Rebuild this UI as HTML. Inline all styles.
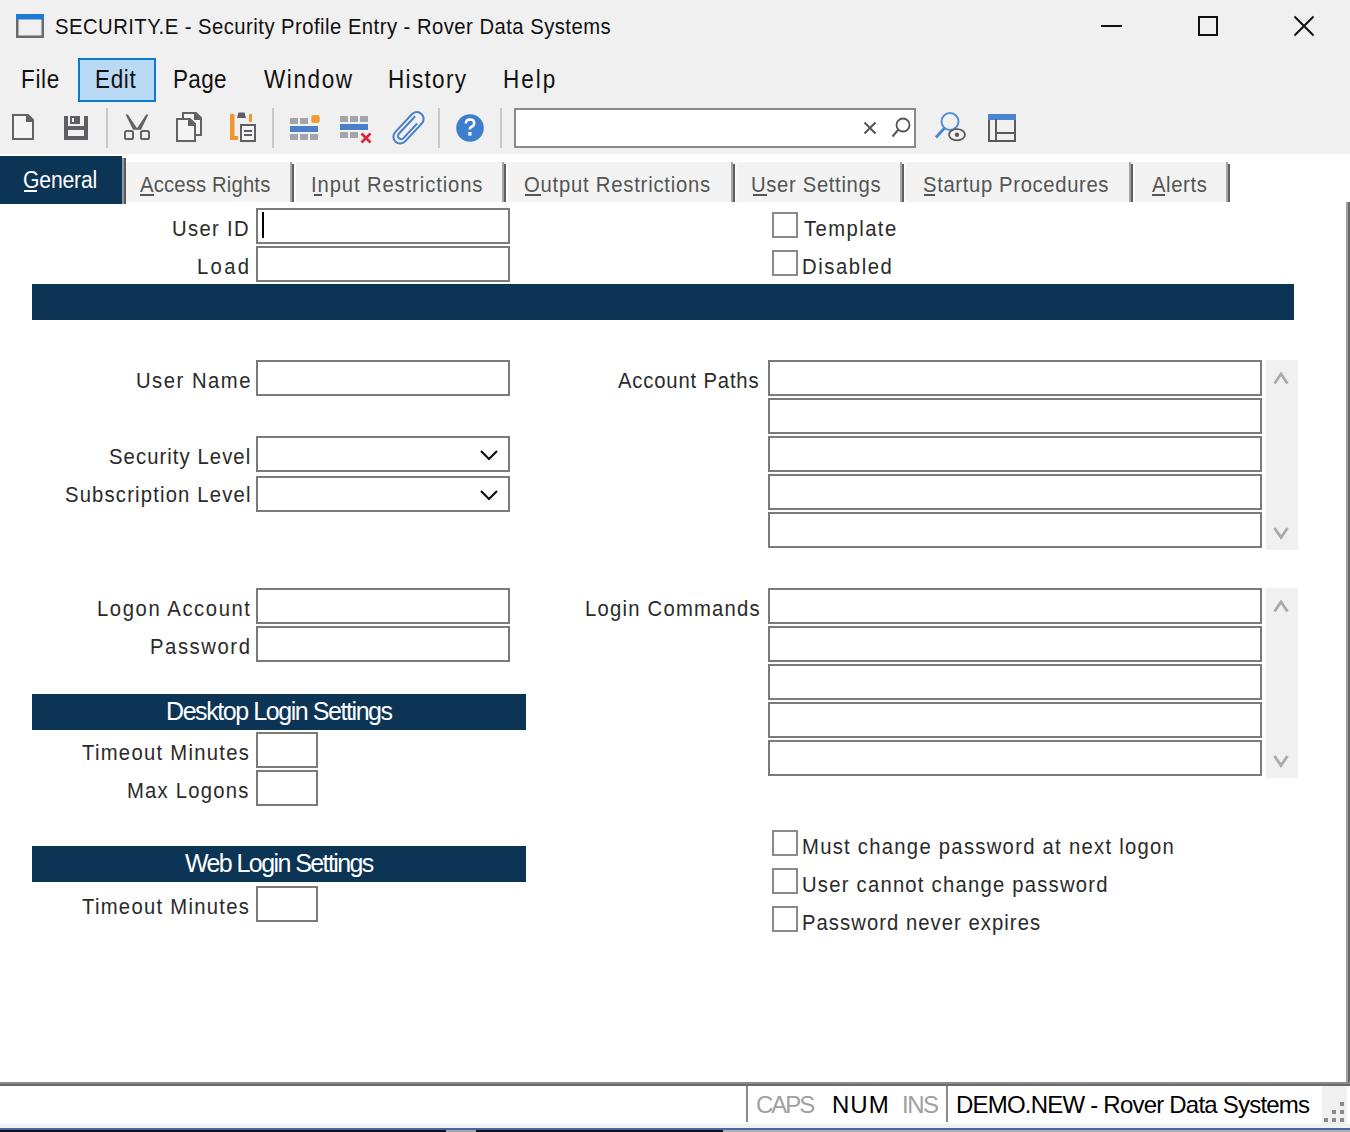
<!DOCTYPE html>
<html><head><meta charset="utf-8"><style>
html,body{margin:0;padding:0}
body{width:1350px;height:1132px;overflow:hidden;position:relative;background:#fff;font-family:'Liberation Sans', sans-serif}
</style></head><body>
<div style="position:absolute;left:0px;top:0px;width:1350px;height:154px;background:#f0f0f0;"></div>
<svg style="position:absolute;left:16px;top:14px" width="28" height="24" viewBox="0 0 28 24"><rect x="1.25" y="1.25" width="25.5" height="21.5" fill="none" stroke="#6b6b6b" stroke-width="2.5"/><rect x="0" y="0" width="28" height="5.5" fill="#1f7ad4"/></svg>
<div style="position:absolute;left:1101px;top:25px;width:21px;height:2px;background:#111;"></div>
<svg style="position:absolute;left:1196px;top:14px" width="24" height="24" viewBox="0 0 24 24"><rect x="3" y="3" width="18" height="18" fill="none" stroke="#111" stroke-width="2"/></svg>
<svg style="position:absolute;left:1292px;top:14px" width="24" height="24" viewBox="0 0 24 24"><path d="M2.5 2.5 L21.5 21.5 M21.5 2.5 L2.5 21.5" stroke="#111" stroke-width="2"/></svg>
<div style="position:absolute;left:78px;top:58px;width:74px;height:40px;border:2px solid #0a78d7;background:#b8d8f4;"></div>
<div style="position:absolute;left:106px;top:108px;width:2px;height:40px;background:#c9c9c9;"></div>
<div style="position:absolute;left:272px;top:108px;width:2px;height:40px;background:#c9c9c9;"></div>
<div style="position:absolute;left:438px;top:108px;width:2px;height:40px;background:#c9c9c9;"></div>
<div style="position:absolute;left:500px;top:108px;width:2px;height:40px;background:#c9c9c9;"></div>
<div style="position:absolute;left:514px;top:108px;width:398px;height:36px;border:2px solid #8a8a8a;background:#fff;"></div>
<div style="position:absolute;left:0px;top:154px;width:1350px;height:50px;background:#fff;"></div>
<div style="position:absolute;left:0px;top:156px;width:122px;height:48px;background:#0c3455;"></div>
<div style="position:absolute;left:122px;top:158px;width:2px;height:46px;background:#8d99a6;"></div>
<div style="position:absolute;left:124px;top:158px;width:2px;height:46px;background:#5a5a5a;"></div>
<div style="position:absolute;left:126px;top:162px;width:164px;height:40px;background:#f3f3f3;"></div>
<div style="position:absolute;left:290px;top:162px;width:212px;height:40px;background:#f3f3f3;"></div>
<div style="position:absolute;left:502px;top:162px;width:229px;height:40px;background:#f3f3f3;"></div>
<div style="position:absolute;left:731px;top:162px;width:169px;height:40px;background:#f3f3f3;"></div>
<div style="position:absolute;left:900px;top:162px;width:229px;height:40px;background:#f3f3f3;"></div>
<div style="position:absolute;left:1129px;top:162px;width:97px;height:40px;background:#f3f3f3;"></div>
<div style="position:absolute;left:290px;top:162px;width:2px;height:40px;background:#a6a6a6;"></div>
<div style="position:absolute;left:292px;top:164px;width:2px;height:38px;background:#5e5e5e;"></div>
<div style="position:absolute;left:294px;top:162px;width:2px;height:40px;background:#fbfbfb;"></div>
<div style="position:absolute;left:502px;top:162px;width:2px;height:40px;background:#a6a6a6;"></div>
<div style="position:absolute;left:504px;top:164px;width:2px;height:38px;background:#5e5e5e;"></div>
<div style="position:absolute;left:506px;top:162px;width:2px;height:40px;background:#fbfbfb;"></div>
<div style="position:absolute;left:731px;top:162px;width:2px;height:40px;background:#a6a6a6;"></div>
<div style="position:absolute;left:733px;top:164px;width:2px;height:38px;background:#5e5e5e;"></div>
<div style="position:absolute;left:735px;top:162px;width:2px;height:40px;background:#fbfbfb;"></div>
<div style="position:absolute;left:900px;top:162px;width:2px;height:40px;background:#a6a6a6;"></div>
<div style="position:absolute;left:902px;top:164px;width:2px;height:38px;background:#5e5e5e;"></div>
<div style="position:absolute;left:904px;top:162px;width:2px;height:40px;background:#fbfbfb;"></div>
<div style="position:absolute;left:1129px;top:162px;width:2px;height:40px;background:#a6a6a6;"></div>
<div style="position:absolute;left:1131px;top:164px;width:2px;height:38px;background:#5e5e5e;"></div>
<div style="position:absolute;left:1133px;top:162px;width:2px;height:40px;background:#fbfbfb;"></div>
<div style="position:absolute;left:1226px;top:162px;width:2px;height:40px;background:#a6a6a6;"></div>
<div style="position:absolute;left:1228px;top:164px;width:2px;height:38px;background:#5e5e5e;"></div>
<div style="position:absolute;left:1230px;top:162px;width:2px;height:40px;background:#fbfbfb;"></div>
<div style="position:absolute;left:24px;top:190px;width:13px;height:2px;background:#fff;"></div>
<div style="position:absolute;left:140px;top:194px;width:14px;height:2px;background:#555;"></div>
<div style="position:absolute;left:314px;top:194px;width:8px;height:2px;background:#555;"></div>
<div style="position:absolute;left:525px;top:194px;width:16px;height:2px;background:#555;"></div>
<div style="position:absolute;left:753px;top:194px;width:14px;height:2px;background:#555;"></div>
<div style="position:absolute;left:924px;top:194px;width:11px;height:2px;background:#555;"></div>
<div style="position:absolute;left:1152px;top:194px;width:13px;height:2px;background:#555;"></div>
<div style="position:absolute;left:1346px;top:202px;width:2px;height:884px;background:#a0a0a0;"></div>
<div style="position:absolute;left:1348px;top:202px;width:2px;height:884px;background:#6a6a6a;"></div>
<div style="position:absolute;left:0px;top:1082px;width:1350px;height:2px;background:#8a8a8a;"></div>
<div style="position:absolute;left:0px;top:1084px;width:1350px;height:2px;background:#6a6a6a;"></div>
<div style="position:absolute;left:0px;top:1086px;width:1350px;height:38px;background:#fff;"></div>
<div style="position:absolute;left:746px;top:1086px;width:2px;height:36px;background:#8a8a8a;"></div>
<div style="position:absolute;left:946px;top:1086px;width:2px;height:36px;background:#8a8a8a;"></div>
<div style="position:absolute;left:1322px;top:1086px;width:25px;height:38px;background:#f0f0f0;"></div>
<div style="position:absolute;left:1340px;top:1102px;width:4px;height:4px;background:#8a8a8a;"></div>
<div style="position:absolute;left:1332px;top:1110px;width:4px;height:4px;background:#8a8a8a;"></div>
<div style="position:absolute;left:1340px;top:1110px;width:4px;height:4px;background:#8a8a8a;"></div>
<div style="position:absolute;left:1324px;top:1118px;width:4px;height:4px;background:#8a8a8a;"></div>
<div style="position:absolute;left:1332px;top:1118px;width:4px;height:4px;background:#8a8a8a;"></div>
<div style="position:absolute;left:1340px;top:1118px;width:4px;height:4px;background:#8a8a8a;"></div>
<div style="position:absolute;left:0px;top:1124px;width:1350px;height:4px;background:#eef2f2;"></div>
<div style="position:absolute;left:0px;top:1128px;width:1350px;height:2px;background:#46689a;"></div>
<div style="position:absolute;left:0px;top:1130px;width:723px;height:2px;background:#0b111c;"></div>
<div style="position:absolute;left:723px;top:1130px;width:627px;height:2px;background:#a9b1b3;"></div>
<div style="position:absolute;left:446px;top:1130px;width:30px;height:2px;background:#a0a8ac;"></div>
<div style="position:absolute;left:256px;top:208px;width:250px;height:32px;border:2px solid #7a7a7a;background:#fff;"></div>
<div style="position:absolute;left:256px;top:246px;width:250px;height:32px;border:2px solid #7a7a7a;background:#fff;"></div>
<div style="position:absolute;left:32px;top:284px;width:1262px;height:36px;background:#0c3455;"></div>
<div style="position:absolute;left:256px;top:360px;width:250px;height:32px;border:2px solid #7a7a7a;background:#fff;"></div>
<div style="position:absolute;left:256px;top:436px;width:250px;height:32px;border:2px solid #7a7a7a;background:#fff;"></div>
<div style="position:absolute;left:256px;top:476px;width:250px;height:32px;border:2px solid #7a7a7a;background:#fff;"></div>
<div style="position:absolute;left:256px;top:588px;width:250px;height:32px;border:2px solid #7a7a7a;background:#fff;"></div>
<div style="position:absolute;left:256px;top:626px;width:250px;height:32px;border:2px solid #7a7a7a;background:#fff;"></div>
<div style="position:absolute;left:768px;top:360px;width:490px;height:32px;border:2px solid #7a7a7a;background:#fff;"></div>
<div style="position:absolute;left:768px;top:588px;width:490px;height:32px;border:2px solid #7a7a7a;background:#fff;"></div>
<div style="position:absolute;left:768px;top:398px;width:490px;height:32px;border:2px solid #7a7a7a;background:#fff;"></div>
<div style="position:absolute;left:768px;top:626px;width:490px;height:32px;border:2px solid #7a7a7a;background:#fff;"></div>
<div style="position:absolute;left:768px;top:436px;width:490px;height:32px;border:2px solid #7a7a7a;background:#fff;"></div>
<div style="position:absolute;left:768px;top:664px;width:490px;height:32px;border:2px solid #7a7a7a;background:#fff;"></div>
<div style="position:absolute;left:768px;top:474px;width:490px;height:32px;border:2px solid #7a7a7a;background:#fff;"></div>
<div style="position:absolute;left:768px;top:702px;width:490px;height:32px;border:2px solid #7a7a7a;background:#fff;"></div>
<div style="position:absolute;left:768px;top:512px;width:490px;height:32px;border:2px solid #7a7a7a;background:#fff;"></div>
<div style="position:absolute;left:768px;top:740px;width:490px;height:32px;border:2px solid #7a7a7a;background:#fff;"></div>
<div style="position:absolute;left:1266px;top:360px;width:32px;height:190px;background:#f0f0f0;"></div>
<div style="position:absolute;left:1266px;top:588px;width:32px;height:190px;background:#f0f0f0;"></div>
<svg style="position:absolute;left:1273px;top:371px" width="16" height="14" viewBox="0 0 16 14"><path d="M1.5 12.5 L8 3 L14.5 12.5" fill="none" stroke="#aaaaaa" stroke-width="2.8"/></svg>
<svg style="position:absolute;left:1273px;top:526px" width="16" height="14" viewBox="0 0 16 14"><path d="M1.5 2 L8 11.5 L14.5 2" fill="none" stroke="#aaaaaa" stroke-width="2.8"/></svg>
<svg style="position:absolute;left:1273px;top:599px" width="16" height="14" viewBox="0 0 16 14"><path d="M1.5 12.5 L8 3 L14.5 12.5" fill="none" stroke="#aaaaaa" stroke-width="2.8"/></svg>
<svg style="position:absolute;left:1273px;top:754px" width="16" height="14" viewBox="0 0 16 14"><path d="M1.5 2 L8 11.5 L14.5 2" fill="none" stroke="#aaaaaa" stroke-width="2.8"/></svg>
<svg style="position:absolute;left:479px;top:449px" width="20" height="12" viewBox="0 0 20 12"><path d="M2 2 L10 10 L18 2" fill="none" stroke="#111" stroke-width="2.2"/></svg>
<svg style="position:absolute;left:479px;top:489px" width="20" height="12" viewBox="0 0 20 12"><path d="M2 2 L10 10 L18 2" fill="none" stroke="#111" stroke-width="2.2"/></svg>
<div style="position:absolute;left:32px;top:694px;width:494px;height:36px;background:#0c3455;"></div>
<div style="position:absolute;left:256px;top:732px;width:58px;height:32px;border:2px solid #7a7a7a;background:#fff;"></div>
<div style="position:absolute;left:256px;top:770px;width:58px;height:32px;border:2px solid #7a7a7a;background:#fff;"></div>
<div style="position:absolute;left:32px;top:846px;width:494px;height:36px;background:#0c3455;"></div>
<div style="position:absolute;left:256px;top:886px;width:58px;height:32px;border:2px solid #7a7a7a;background:#fff;"></div>
<div style="position:absolute;left:262px;top:212px;width:2px;height:26px;background:#000;"></div>
<div style="position:absolute;left:772px;top:212px;width:22px;height:22px;border:2px solid #8a8a8a;background:#fff;"></div>
<div style="position:absolute;left:772px;top:250px;width:22px;height:22px;border:2px solid #8a8a8a;background:#fff;"></div>
<div style="position:absolute;left:772px;top:830px;width:22px;height:22px;border:2px solid #8a8a8a;background:#fff;"></div>
<div style="position:absolute;left:772px;top:868px;width:22px;height:22px;border:2px solid #8a8a8a;background:#fff;"></div>
<div style="position:absolute;left:772px;top:906px;width:22px;height:22px;border:2px solid #8a8a8a;background:#fff;"></div>
<svg style="position:absolute;left:0;top:0" width="1030" height="154" viewBox="0 0 1030 154">
<g fill="none" stroke="#626262" stroke-width="2">
 <!-- new doc -->
 <path d="M13 115 H28 L33 120 V139 H13 Z" fill="#f4f4f4"/>
 <path d="M27 115 V121 H33" fill="#626262" stroke-width="2"/>
 <!-- copy back -->
 <path d="M183 119 V113 H196 L201 118 V135 H195" fill="#f4f4f4"/>
 <path d="M195 113 V119 H201" fill="#626262"/>
 <!-- copy front -->
 <path d="M177 119 H190 L195 124 V141 H177 Z" fill="#f4f4f4"/>
 <path d="M189 119 V125 H195" fill="#626262"/>
</g>
<!-- save -->
<path d="M64 116 H88 V140 H64 Z M68 116 V126 H84 V116 Z M68 130 V136 H84 V130 Z" fill="#5f5f63" fill-rule="evenodd"/>
<rect x="70" y="116" width="10" height="8" fill="#5f5f63"/>
<rect x="72" y="118" width="2" height="4" fill="#f4f4f4"/>
<!-- scissors -->
<path d="M125.6 114.5 L127.8 114.5 L138 129.8 L133 129.8 Z" fill="#646464"/>
<path d="M148.4 114.5 L146.2 114.5 L136 129.8 L141 129.8 Z" fill="#646464"/>
<rect x="125" y="131" width="8" height="8" rx="1.6" fill="none" stroke="#646464" stroke-width="2"/>
<rect x="141" y="131" width="8" height="8" rx="1.6" fill="none" stroke="#646464" stroke-width="2"/>
<!-- paste -->
<path d="M230 114 H234.5 V136 H238 V140 H230 Z" fill="#f0962e"/>
<rect x="249" y="114" width="3" height="8" fill="#f0962e"/>
<path d="M237 118 L238.5 112.5 H244.5 L246 118 Z" fill="#5f5f63"/>
<rect x="241" y="125" width="14" height="16" fill="#f4f4f4" stroke="#5f5f63" stroke-width="2"/>
<rect x="244" y="130" width="8" height="2" fill="#5f5f63"/>
<rect x="244" y="134" width="8" height="2" fill="#5f5f63"/>
<!-- insert row -->
<g fill="#a4a4ac">
 <rect x="290" y="118" width="8" height="6"/><rect x="300" y="118" width="8" height="6"/>
 <rect x="290" y="134" width="8" height="6"/><rect x="300" y="134" width="8" height="6"/><rect x="310" y="134" width="8" height="6"/>
</g>
<rect x="290" y="126" width="28" height="6" fill="#4a80c8"/>
<rect x="311.3" y="115" width="8.4" height="8" rx="2.2" fill="#f39a36"/>
<!-- delete row -->
<g fill="#a4a4ac">
 <rect x="340" y="116" width="8" height="6"/><rect x="350" y="116" width="8" height="6"/><rect x="360" y="116" width="8" height="6"/>
 <rect x="340" y="132" width="8" height="6"/><rect x="350" y="132" width="8" height="6"/>
</g>
<rect x="340" y="124" width="28" height="6" fill="#4a80c8"/>
<path d="M361.5 133.5 L370.5 142.5 M370.5 133.5 L361.5 142.5" stroke="#d42a3a" stroke-width="2.7"/>
<!-- paperclip -->
<g transform="translate(408.5 127.8) rotate(-47)" fill="none" stroke="#4a80c6" stroke-width="2">
 <rect x="-19" y="-6.8" width="38" height="13.6" rx="6.8"/>
 <path d="M13 -3 H-11 A3.2 3.2 0 0 0 -11 3.4 H9"/>
</g>
<!-- help -->
<circle cx="470" cy="128" r="13.8" fill="#3d7ecf"/>
<path d="M465.8 123.5 Q466 119.5 470 119.5 Q474.2 119.5 474.2 123.2 Q474.2 125.6 471.2 127 Q469.8 127.6 469.8 129.5" fill="none" stroke="#fff" stroke-width="2.5"/>
<rect x="468.3" y="132" width="3.2" height="3.6" fill="#fff"/>
<!-- search clear x -->
<path d="M864.5 122.5 L875.5 133.5 M875.5 122.5 L864.5 133.5" stroke="#555" stroke-width="2"/>
<!-- search magnifier -->
<circle cx="903" cy="125" r="6.5" fill="none" stroke="#555" stroke-width="1.8"/>
<path d="M898.5 129.5 L892.5 136.5" stroke="#555" stroke-width="2"/>
<!-- blue magnifier with eye -->
<circle cx="950" cy="121.5" r="8.5" fill="none" stroke="#5590d6" stroke-width="2"/>
<path d="M944.5 128 L936 137.5" stroke="#4a86d0" stroke-width="2.8"/>
<ellipse cx="957" cy="134.8" rx="8" ry="5.6" fill="#f0f0f0" stroke="#5a5a5a" stroke-width="1.8"/>
<circle cx="957" cy="134.8" r="2.2" fill="#5a5a5a"/>
<!-- layout icon -->
<rect x="989" y="115" width="26" height="26" fill="none" stroke="#5a5a5a" stroke-width="2"/>
<rect x="988" y="114" width="28" height="6" fill="#4a86d0"/>
<rect x="995" y="119" width="2" height="22" fill="#5a5a5a"/>
<rect x="996" y="132" width="19" height="2" fill="#5a5a5a"/>
</svg>

<div style="position:absolute;left:55px;top:7px;font-size:22.5px;line-height:40px;letter-spacing:0.525px;color:#111;white-space:nowrap;transform:scaleX(0.9);transform-origin:0 0;">SECURITY.E - Security Profile Entry - Rover Data Systems</div>
<div style="position:absolute;left:21px;top:59px;font-size:25px;line-height:40px;letter-spacing:0.741px;color:#111;white-space:nowrap;transform:scaleX(0.9);transform-origin:0 0;">File</div>
<div style="position:absolute;left:95px;top:59px;font-size:25px;line-height:40px;letter-spacing:0.741px;color:#111;white-space:nowrap;transform:scaleX(0.9);transform-origin:0 0;">Edit</div>
<div style="position:absolute;left:173px;top:59px;font-size:25px;line-height:40px;letter-spacing:0.370px;color:#111;white-space:nowrap;transform:scaleX(0.9);transform-origin:0 0;">Page</div>
<div style="position:absolute;left:264px;top:59px;font-size:25px;line-height:40px;letter-spacing:1.778px;color:#111;white-space:nowrap;transform:scaleX(0.9);transform-origin:0 0;">Window</div>
<div style="position:absolute;left:388px;top:59px;font-size:25px;line-height:40px;letter-spacing:1.481px;color:#111;white-space:nowrap;transform:scaleX(0.9);transform-origin:0 0;">History</div>
<div style="position:absolute;left:503px;top:59px;font-size:25px;line-height:40px;letter-spacing:2.222px;color:#111;white-space:nowrap;transform:scaleX(0.9);transform-origin:0 0;">Help</div>
<div style="position:absolute;left:23px;top:160px;font-size:23.5px;line-height:40px;letter-spacing:-0.185px;color:#fff;white-space:nowrap;transform:scaleX(0.9);transform-origin:0 0;">General</div>
<div style="position:absolute;left:140px;top:165px;font-size:22.5px;line-height:40px;letter-spacing:0.185px;color:#555555;white-space:nowrap;transform:scaleX(0.9);transform-origin:0 0;">Access Rights</div>
<div style="position:absolute;left:311px;top:165px;font-size:22.5px;line-height:40px;letter-spacing:0.980px;color:#555555;white-space:nowrap;transform:scaleX(0.9);transform-origin:0 0;">Input Restrictions</div>
<div style="position:absolute;left:524px;top:165px;font-size:22.5px;line-height:40px;letter-spacing:0.864px;color:#555555;white-space:nowrap;transform:scaleX(0.9);transform-origin:0 0;">Output Restrictions</div>
<div style="position:absolute;left:751px;top:165px;font-size:22.5px;line-height:40px;letter-spacing:0.741px;color:#555555;white-space:nowrap;transform:scaleX(0.9);transform-origin:0 0;">User Settings</div>
<div style="position:absolute;left:923px;top:165px;font-size:22.5px;line-height:40px;letter-spacing:0.719px;color:#555555;white-space:nowrap;transform:scaleX(0.9);transform-origin:0 0;">Startup Procedures</div>
<div style="position:absolute;left:1152px;top:165px;font-size:22.5px;line-height:40px;letter-spacing:0.667px;color:#555555;white-space:nowrap;transform:scaleX(0.9);transform-origin:0 0;">Alerts</div>
<div style="position:absolute;left:172px;top:209px;font-size:22.5px;line-height:40px;letter-spacing:1.481px;color:#2a2a2a;white-space:nowrap;transform:scaleX(0.9);transform-origin:0 0;">User ID</div>
<div style="position:absolute;left:197px;top:247px;font-size:22.5px;line-height:40px;letter-spacing:2.593px;color:#2a2a2a;white-space:nowrap;transform:scaleX(0.9);transform-origin:0 0;">Load</div>
<div style="position:absolute;left:804px;top:209px;font-size:22.5px;line-height:40px;letter-spacing:1.587px;color:#2a2a2a;white-space:nowrap;transform:scaleX(0.9);transform-origin:0 0;">Template</div>
<div style="position:absolute;left:802px;top:247px;font-size:22.5px;line-height:40px;letter-spacing:1.746px;color:#2a2a2a;white-space:nowrap;transform:scaleX(0.9);transform-origin:0 0;">Disabled</div>
<div style="position:absolute;left:136px;top:361px;font-size:22.5px;line-height:40px;letter-spacing:1.667px;color:#2a2a2a;white-space:nowrap;transform:scaleX(0.9);transform-origin:0 0;">User Name</div>
<div style="position:absolute;left:109px;top:437px;font-size:22.5px;line-height:40px;letter-spacing:1.197px;color:#2a2a2a;white-space:nowrap;transform:scaleX(0.9);transform-origin:0 0;">Security Level</div>
<div style="position:absolute;left:65px;top:475px;font-size:22.5px;line-height:40px;letter-spacing:1.307px;color:#2a2a2a;white-space:nowrap;transform:scaleX(0.9);transform-origin:0 0;">Subscription Level</div>
<div style="position:absolute;left:97px;top:589px;font-size:22.5px;line-height:40px;letter-spacing:1.759px;color:#2a2a2a;white-space:nowrap;transform:scaleX(0.9);transform-origin:0 0;">Logon Account</div>
<div style="position:absolute;left:150px;top:627px;font-size:22.5px;line-height:40px;letter-spacing:1.746px;color:#2a2a2a;white-space:nowrap;transform:scaleX(0.9);transform-origin:0 0;">Password</div>
<div style="position:absolute;left:618px;top:361px;font-size:22.5px;line-height:40px;letter-spacing:0.926px;color:#2a2a2a;white-space:nowrap;transform:scaleX(0.9);transform-origin:0 0;">Account Paths</div>
<div style="position:absolute;left:585px;top:589px;font-size:22.5px;line-height:40px;letter-spacing:1.368px;color:#2a2a2a;white-space:nowrap;transform:scaleX(0.9);transform-origin:0 0;">Login Commands</div>
<div style="position:absolute;left:166px;top:691px;font-size:25px;line-height:40px;letter-spacing:-1.429px;color:#fff;white-space:nowrap;transform:scaleX(1);transform-origin:0 0;">Desktop Login Settings</div>
<div style="position:absolute;left:82px;top:733px;font-size:22.5px;line-height:40px;letter-spacing:1.429px;color:#2a2a2a;white-space:nowrap;transform:scaleX(0.9);transform-origin:0 0;">Timeout Minutes</div>
<div style="position:absolute;left:127px;top:771px;font-size:22.5px;line-height:40px;letter-spacing:1.358px;color:#2a2a2a;white-space:nowrap;transform:scaleX(0.9);transform-origin:0 0;">Max Logons</div>
<div style="position:absolute;left:185px;top:843px;font-size:25px;line-height:40px;letter-spacing:-1.588px;color:#fff;white-space:nowrap;transform:scaleX(1);transform-origin:0 0;">Web Login Settings</div>
<div style="position:absolute;left:82px;top:887px;font-size:22.5px;line-height:40px;letter-spacing:1.429px;color:#2a2a2a;white-space:nowrap;transform:scaleX(0.9);transform-origin:0 0;">Timeout Minutes</div>
<div style="position:absolute;left:802px;top:827px;font-size:22.5px;line-height:40px;letter-spacing:1.414px;color:#2a2a2a;white-space:nowrap;transform:scaleX(0.9);transform-origin:0 0;">Must change password at next logon</div>
<div style="position:absolute;left:802px;top:865px;font-size:22.5px;line-height:40px;letter-spacing:1.368px;color:#2a2a2a;white-space:nowrap;transform:scaleX(0.9);transform-origin:0 0;">User cannot change password</div>
<div style="position:absolute;left:802px;top:903px;font-size:22.5px;line-height:40px;letter-spacing:1.164px;color:#2a2a2a;white-space:nowrap;transform:scaleX(0.9);transform-origin:0 0;">Password never expires</div>
<div style="position:absolute;left:756px;top:1085px;font-size:24px;line-height:40px;letter-spacing:-2.000px;color:#a0a0a0;white-space:nowrap;transform:scaleX(1);transform-origin:0 0;">CAPS</div>
<div style="position:absolute;left:832px;top:1085px;font-size:24px;line-height:40px;letter-spacing:1.000px;color:#000;white-space:nowrap;transform:scaleX(1);transform-origin:0 0;">NUM</div>
<div style="position:absolute;left:902px;top:1085px;font-size:24px;line-height:40px;letter-spacing:-1.500px;color:#a0a0a0;white-space:nowrap;transform:scaleX(1);transform-origin:0 0;">INS</div>
<div style="position:absolute;left:956px;top:1085px;font-size:24px;line-height:40px;letter-spacing:-0.786px;color:#000;white-space:nowrap;transform:scaleX(1);transform-origin:0 0;">DEMO.NEW - Rover Data Systems</div>
</body></html>
